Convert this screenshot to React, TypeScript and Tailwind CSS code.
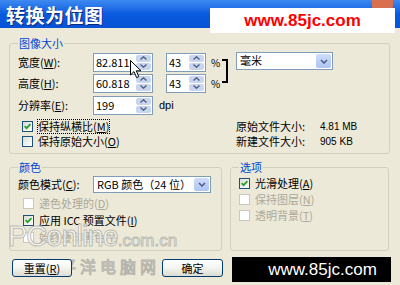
import React from 'react';

const Spinner = () => (
  <div className="m-[1px] flex w-[15px] flex-col gap-[1px]">
    <div className="flex flex-1 items-center justify-center rounded-[2px] bg-[#c9d5ee]">
      <svg width="7" height="4" viewBox="0 0 7 4">
        <path d="M0.5 3.5 L3.5 0.8 L6.5 3.5" stroke="#4d6185" strokeWidth="1.4" fill="none" />
      </svg>
    </div>
    <div className="flex flex-1 items-center justify-center rounded-[2px] bg-[#c9d5ee]">
      <svg width="7" height="4" viewBox="0 0 7 4">
        <path d="M0.5 0.5 L3.5 3.2 L6.5 0.5" stroke="#4d6185" strokeWidth="1.4" fill="none" />
      </svg>
    </div>
  </div>
);

const NumBox = ({ value, w }: { value: string; w: string }) => (
  <div className={`flex h-[19px] items-stretch border border-[#7f9db9] bg-white ${w}`}>
    <span className="flex-1 pl-[2px] text-[11px] leading-[17px]">{value}</span>
    <Spinner />
  </div>
);

const Chevron = () => (
  <svg width="8" height="5" viewBox="0 0 8 5">
    <path d="M1 1 L4 4 L7 1" stroke="#4d6185" strokeWidth="1.6" fill="none" />
  </svg>
);

const Select = ({ text, w, h }: { text: string; w: string; h: string }) => (
  <div className={`flex border border-[#7f9db9] bg-white ${w} ${h}`}>
    <span className="flex-1 truncate pl-[3px] leading-[15px]">{text}</span>
    <div className="m-[1px] flex w-[15px] items-center justify-center rounded-[2px] bg-gradient-to-b from-[#cfdcfb] to-[#aec4f5]">
      <Chevron />
    </div>
  </div>
);

const Check = ({ checked, disabled }: { checked?: boolean; disabled?: boolean }) => (
  <span
    className={`flex h-[11px] w-[11px] shrink-0 items-center justify-center border ${
      disabled ? 'border-[#cac8bb] bg-white' : 'border-[#1c5180] bg-gradient-to-br from-[#dcdcd7] to-white'
    }`}
  >
    {checked && (
      <svg width="7" height="7" viewBox="0 0 7 7">
        <path d="M0.6 3.2 L2.6 5.2 L6.4 1.2" stroke="#21a121" strokeWidth="1.7" fill="none" />
      </svg>
    )}
  </span>
);

const Key = ({ k }: { k: string }) => <span className="underline">{k}</span>;

const CheckRow = ({
  label,
  k,
  checked,
  disabled,
  focus,
  h,
}: {
  label: string;
  k: string;
  checked?: boolean;
  disabled?: boolean;
  focus?: boolean;
  h: string;
}) => (
  <div className={`flex items-center gap-[4px] ${h}`}>
    <Check checked={checked} disabled={disabled} />
    <span
      className={`leading-[13px] ${disabled ? 'text-[#aca899]' : 'text-black'} ${
        focus ? 'border border-dotted border-black' : 'border border-transparent'
      }`}
    >
      {label}(<Key k={k} />)
    </span>
  </div>
);

const FieldRow = ({ label, k, children, h }: { label: string; k: string; children: React.ReactNode; h: string }) => (
  <div className={`flex items-center ${h}`}>
    <span className="w-[75px]">
      {label}(<Key k={k} />):
    </span>
    {children}
  </div>
);

const Legend = ({ text }: { text: string }) => (
  <legend className="px-[1px] leading-[14px] text-[#0046d5]">{text}</legend>
);

const XpButton = ({ children, w }: { children: React.ReactNode; w: string }) => (
  <div
    className={`mt-[2px] flex h-[18px] items-center justify-center rounded-[3px] border border-[#003c74] bg-gradient-to-b from-white via-[#f4f4f0] to-[#dcdcd2] ${w}`}
  >
    {children}
  </div>
);

export default function App() {
  return (
    <div className="relative h-[285px] w-[400px] overflow-hidden bg-[#ece9d8] font-['Noto_Sans_CJK_SC',sans-serif] text-[11px] text-black">
      {/* title bar */}
      <div className="flex h-[28px] items-center bg-gradient-to-b from-[#3d8af2] via-[#0a5ade] to-[#0852d4] pl-[6px]">
        <span className="text-[19px] font-bold leading-none tracking-[0.5px] text-white [text-shadow:1px_1px_0_#0a2a7a]">
          转换为位图
        </span>
      </div>
      <div className="absolute left-[372px] top-0 h-[9px] w-[21px] rounded-b-[3px] bg-[#d86f4e]" />
      <div className="absolute left-[210px] top-[8px] flex h-[25px] w-[185px] items-center justify-center bg-white">
        <span className="font-['Liberation_Sans',sans-serif] text-[17px] font-bold leading-none text-[#ff0000]">
          www.85jc.com
        </span>
      </div>

      <div className="px-[9px]">
        {/* 图像大小 */}
        <fieldset className="mt-[8px] h-[118px] w-[381px] rounded-[3px] border border-[#d0d0bf] px-[8px]">
          <Legend text="图像大小" />
          <div className="mt-[2px] flex">
            <div className="flex flex-col">
              <FieldRow label="宽度" k="W" h="h-[20px]">
                <NumBox value="82.811" w="w-[60px]" />
                <div className="ml-[13px]">
                  <NumBox value="43" w="w-[40px]" />
                </div>
                <span className="ml-[5px] w-[7px] text-[10px]">%</span>
              </FieldRow>
              <div className="mt-[1px]">
                <FieldRow label="高度" k="H" h="h-[20px]">
                  <NumBox value="60.818" w="w-[60px]" />
                  <div className="ml-[13px]">
                    <NumBox value="43" w="w-[40px]" />
                  </div>
                  <span className="ml-[5px] w-[7px] text-[10px]">%</span>
                </FieldRow>
              </div>
              <div className="mt-[2px]">
                <FieldRow label="分辨率" k="E" h="h-[20px]">
                  <NumBox value="199" w="w-[60px]" />
                  <span className="ml-[6px] font-['Liberation_Sans',sans-serif]">dpi</span>
                </FieldRow>
              </div>
            </div>
            <div className="ml-[4px] mt-[7px] h-[24px] w-[6px] border-y-2 border-r-2 border-black" />
            <div className="ml-[8px]">
              <Select text="毫米" w="w-[97px]" h="h-[18px]" />
            </div>
          </div>
          <div className="mt-[4px] flex">
            <div className="flex w-[218px] flex-col pl-[4px]">
              <CheckRow label="保持纵横比" k="M" checked focus h="h-[15px]" />
              <CheckRow label="保持原始大小" k="O" h="h-[15px]" />
            </div>
            <div className="flex flex-col">
              <div className="flex h-[15px] items-center">
                <span className="w-[84px]">原始文件大小:</span>
                <span className="font-['Liberation_Sans',sans-serif] text-[10px]">4.81 MB</span>
              </div>
              <div className="flex h-[15px] items-center">
                <span className="w-[84px]">新建文件大小:</span>
                <span className="font-['Liberation_Sans',sans-serif] text-[10px]">905 KB</span>
              </div>
            </div>
          </div>
        </fieldset>

        <div className="mt-[6px] flex gap-[8px]">
          {/* 颜色 */}
          <fieldset className="h-[91px] w-[213px] rounded-[3px] border border-[#d0d0bf] px-[8px]">
            <Legend text="颜色" />
            <div className="mt-[2px]">
              <FieldRow label="颜色模式" k="C" h="h-[17px]">
                <Select text="RGB 颜色（24 位）" w="w-[118px]" h="h-[17px]" />
              </FieldRow>
            </div>
            <div className="mt-[2px] flex flex-col pl-[5px]">
              <CheckRow label="递色处理的" k="D" disabled h="h-[17px]" />
              <CheckRow label="应用 ICC 预置文件" k="I" checked h="h-[17px]" />
              <CheckRow label="始终叠印黑色" k="Y" disabled h="h-[17px]" />
            </div>
          </fieldset>

          {/* 选项 */}
          <fieldset className="h-[91px] w-[159px] rounded-[3px] border border-[#d0d0bf] px-[8px]">
            <Legend text="选项" />
            <div className="mt-[1px] flex flex-col">
              <CheckRow label="光滑处理" k="A" checked h="h-[16px]" />
              <CheckRow label="保持图层" k="N" disabled h="h-[16px]" />
              <CheckRow label="透明背景" k="T" disabled h="h-[16px]" />
            </div>
          </fieldset>
        </div>

        <div className="relative z-10 mt-[6px] flex items-start">
          <div className="ml-[3px]">
            <XpButton w="w-[60px]">
              重置(<Key k="R" />)
            </XpButton>
          </div>
          <div className="ml-[90px]">
            <XpButton w="w-[61px]">确定</XpButton>
          </div>
          <div className="ml-[9px] flex h-[25px] w-[160px] items-center justify-center bg-black">
            <span className="ml-[22px] font-['Liberation_Sans',sans-serif] text-[17px] leading-none text-white">
              www.85jc.com
            </span>
          </div>
        </div>
      </div>

      {/* PConline watermark */}
      <div className="pointer-events-none absolute left-[8px] top-[222px] flex items-end font-['Liberation_Sans',sans-serif] text-white/75 [-webkit-text-stroke:1px_#bdbdb4]">
        <span className="text-[29px] leading-none tracking-[-1px]">PConline</span>
        <span className="mb-[2px] text-[17px] leading-none">.com.cn</span>
      </div>
      <div className="pointer-events-none absolute left-[40px] top-[258px] flex gap-[4px] text-[16px] leading-none text-white/70 [-webkit-text-stroke:1px_#b4b4ac]">
        <span>太</span>
        <span>平</span>
        <span>洋</span>
        <span>电</span>
        <span>脑</span>
        <span>网</span>
      </div>

      {/* mouse cursor */}
      <svg className="pointer-events-none absolute left-[130px] top-[60px]" width="12" height="19" viewBox="0 0 12 19">
        <path d="M0.5 0.5 L0.5 15 L4 11.6 L6.6 17.6 L8.8 16.6 L6.3 10.8 L11 10.8 Z" fill="white" stroke="black" strokeWidth="1" />
      </svg>
    </div>
  );
}
